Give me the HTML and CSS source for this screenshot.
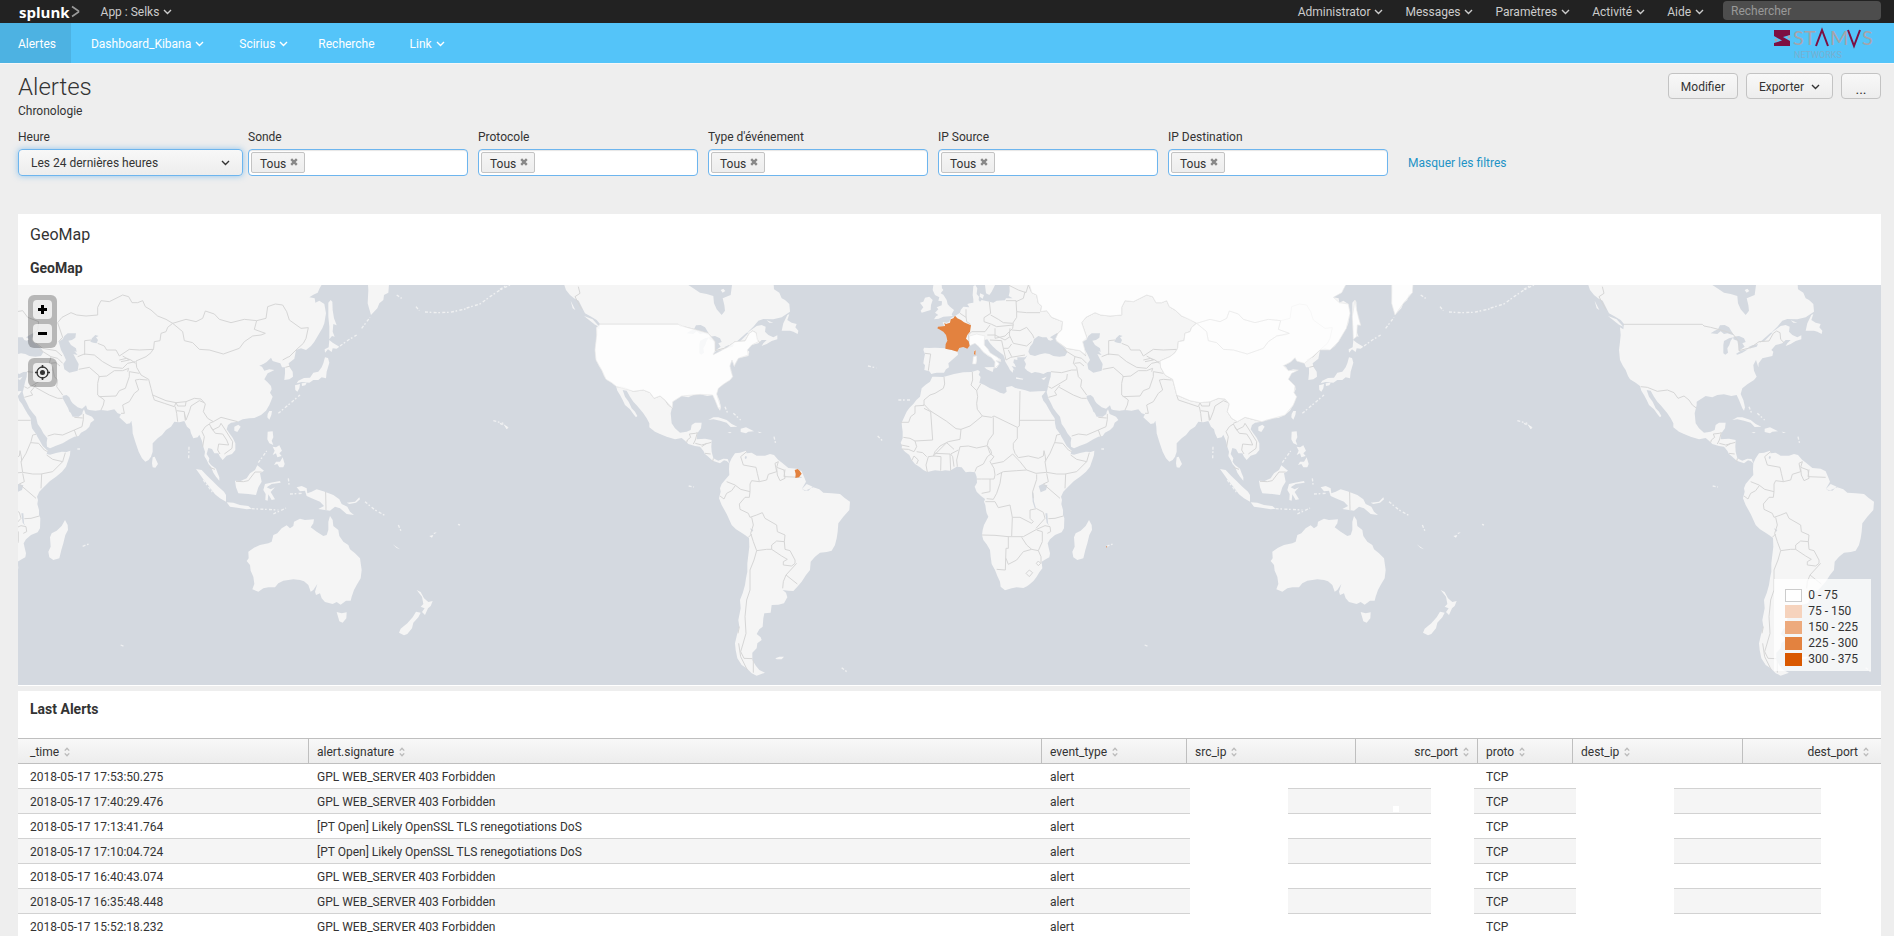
FILE: index.html
```
<!DOCTYPE html>
<html lang="fr">
<head>
  <meta charset="UTF-8">
  <meta name="viewport" content="width=device-width, initial-scale=1.0">
  <title>Alertes | Splunk</title>
  <link rel="stylesheet" href="styles.css">
</head>
<body>
  <svg class="defs" width="0" height="0" aria-hidden="true">
    <symbol id="caret" viewBox="0 0 9 6"><path d="M1 1l3.5 3.5L8 1" fill="none" stroke="currentColor" stroke-width="1.4"/></symbol>
    <symbol id="sort" viewBox="0 0 6 10"><path d="M.8 3.6L3 1.2l2.2 2.4M.8 6.4L3 8.8l2.2-2.4" fill="none" stroke="currentColor" stroke-width="1.4"/></symbol>
    <symbol id="cross" viewBox="0 0 8 8"><path d="M1.2 1.2l5.6 5.6M6.8 1.2L1.2 6.8" fill="none" stroke="currentColor" stroke-width="2.4"/></symbol>
  </svg>

  <header class="topbar">
    <a class="brand" href="#">splunk<svg width="9" height="13" viewBox="0 0 9 13"><path d="M1 1.5l6.500 4.500v1L1 11.500" fill="none" stroke="#999" stroke-width="1.6"/></svg></a>
    <a class="menu" href="#">App : Selks <svg class="caret"><use href="#caret"/></svg></a>
    <nav class="account">
      <a class="menu" href="#">Administrator <svg class="caret"><use href="#caret"/></svg></a>
      <a class="menu" href="#">Messages <svg class="caret"><use href="#caret"/></svg></a>
      <a class="menu" href="#">Paramètres <svg class="caret"><use href="#caret"/></svg></a>
      <a class="menu" href="#">Activité <svg class="caret"><use href="#caret"/></svg></a>
      <a class="menu" href="#">Aide <svg class="caret"><use href="#caret"/></svg></a>
    </nav>
    <input class="search" type="text" placeholder="Rechercher" aria-label="Rechercher">
  </header>

  <nav class="navbar">
    <a class="active" href="#">Alertes</a>
    <a class="drop" href="#">Dashboard_Kibana <svg class="caret"><use href="#caret"/></svg></a>
    <a class="drop" href="#">Scirius <svg class="caret"><use href="#caret"/></svg></a>
    <a href="#">Recherche</a>
    <a class="drop" href="#">Link <svg class="caret"><use href="#caret"/></svg></a>
    <svg class="stamus" width="102" height="34" viewBox="0 0 102 34">
      <path d="M0 4h16v5l-7 2 7 4v5H0v-3l8-2.500L0 10z" fill="#7d0f42"/>
      <circle cx="2" cy="14" r="1.500" fill="#b3a0a8"/><circle cx="15" cy="11" r="1.500" fill="#b3a0a8"/>
      <g class="stamus-name"><text x="19" y="19">S</text><text x="30" y="19">T</text><text x="56" y="19">M</text><text x="88" y="19">S</text></g>
      <path d="M42 20l6-16 6 16M74 4l6 16 6-16" fill="none" stroke="#7d0f42" stroke-width="2"/>
      <text class="stamus-sub" x="20" y="32">NETWORKS</text>
    </svg>
  </nav>

  <main>
    <div class="heading">
      <div>
        <h1>Alertes</h1>
        <p>Chronologie</p>
      </div>
      <div class="actions">
        <button type="button">Modifier</button>
        <button type="button">Exporter <svg class="caret"><use href="#caret"/></svg></button>
        <button type="button" class="more">...</button>
      </div>
    </div>

    <form class="filters">
      <div class="field time">
        <label for="heure">Heure</label>
        <select id="heure"><option>Les 24 dernières heures</option></select>
      </div>
      <div class="field">
        <label for="sonde">Sonde</label>
        <div class="multi"><span class="tag">Tous <button type="button" aria-label="Retirer"><svg><use href="#cross"/></svg></button></span><input id="sonde" type="text"></div>
      </div>
      <div class="field">
        <label for="protocole">Protocole</label>
        <div class="multi"><span class="tag">Tous <button type="button" aria-label="Retirer"><svg><use href="#cross"/></svg></button></span><input id="protocole" type="text"></div>
      </div>
      <div class="field">
        <label for="type">Type d'événement</label>
        <div class="multi"><span class="tag">Tous <button type="button" aria-label="Retirer"><svg><use href="#cross"/></svg></button></span><input id="type" type="text"></div>
      </div>
      <div class="field">
        <label for="ipsource">IP Source</label>
        <div class="multi"><span class="tag">Tous <button type="button" aria-label="Retirer"><svg><use href="#cross"/></svg></button></span><input id="ipsource" type="text"></div>
      </div>
      <div class="field">
        <label for="ipdest">IP Destination</label>
        <div class="multi"><span class="tag">Tous <button type="button" aria-label="Retirer"><svg><use href="#cross"/></svg></button></span><input id="ipdest" type="text"></div>
      </div>
      <a class="hide" href="#">Masquer les filtres</a>
    </form>

    <section class="panel">
      <h2>GeoMap</h2>
      <h3>GeoMap</h3>
      <div class="map">
        <svg class="world" viewBox="54 855 5589 1200" preserveAspectRatio="xMidYMid slice" role="img" aria-label="Carte du monde">
          <defs>
            <g id="oldworld">
              <g transform="translate(-432 840)">
                <!-- Africa -->
                <path class="land" d="M157 290L165 290 190 291 222 282 250 277 275 276 294 270 300 275 296 284 302 291 298 309 312 314 330 325 345 330 360 338 372 341 380 335 378 322 395 318 406 324 420 327 436 331 450 335 475 334 497 333 490 343 485 348 490 362 498 372 505 385 515 402 524 415 525 430 528 445 540 462 545 472 550 480 560 498 575 512 572 522 582 524 600 519 618 515 632 516 643 512 642 525 636 543 630 560 618 575 600 590 582 603 560 625 550 635 543 650 546 660 544 672 549 690 549 705 553 715 552 745 545 757 525 765 510 778 503 790 506 803 510 820 508 832 497 838 485 845 487 865 478 877 470 890 461 902 450 912 441 919 430 924 410 922 395 925 375 931 362 920 360 905 352 888 345 870 335 852 332 830 330 810 320 793 310 780 306 765 308 750 312 735 325 710 320 700 318 690 316 675 312 665 315 657 303 648 290 635 284 620 291 608 290 590 285 577 270 575 257 577 245 562 230 560 210 572 195 571 185 573 165 571 142 576 130 570 120 562 105 552 95 540 88 525 75 515 65 505 66 497 62 488 68 475 68 455 66 440 65 428 73 410 80 395 88 384 100 372 109 360 120 350 125 325 137 314 150 305Z"/>
                <!-- Europe and Asia -->
                <path class="land" d="M388 0L389 35 386 48 398 55 378 55 375 61 350 62 340 68 328 65 305 60 300 65 296 60 297 50 290 42 292 25 286 15 280 18 278 45 280 58 280 68 270 70 262 72 268 82 250 80 242 90 240 98 225 108 212 115 208 125 200 128 188 126 192 138 172 142 180 150 190 152 197 163 200 175 202 185 198 205 180 204 165 203 148 204 132 203 130 210 135 222 132 236 130 250 135 256 133 270 148 274 154 282 162 280 170 278 192 278 198 268 207 262 205 250 222 235 234 224 232 212 240 203 253 200 262 205 268 198 276 192 285 190 297 200 303 209 312 218 324 228 335 233 345 245 347 256 343 265 350 264 358 252 354 246 348 242 352 238 363 245 362 238 352 232 340 226 330 218 324 208 313 195 313 180 322 178 330 190 338 199 350 210 362 219 370 225 374 235 376 245 385 260 390 270 398 278 400 268 405 272 395 258 408 262 404 252 400 248 402 238 412 240 412 232 435 232 442 226 436 236 432 240 438 252 434 264 442 272 455 280 465 276 478 278 490 282 502 276 513 275 512 290 508 303 504 320 502 330 500 336 505 355 513 370 520 385 530 398 540 410 545 432 555 446 562 460 574 475 572 488 573 500 582 505 600 497 620 490 640 478 655 470 668 468 675 458 690 450 700 440 704 428 715 420 708 410 696 405 689 402 684 388 680 395 679 402 668 410 650 410 644 398 640 395 636 384 628 370 620 355 620 347 632 345 640 352 645 363 650 370 665 382 678 386 690 376 694 388 700 390 718 392 735 390 755 392 775 388 785 400 795 403 790 412 812 432 822 430 826 422 829 440 830 460 838 486 848 515 858 535 868 545 878 540 885 530 890 515 890 490 905 475 918 465 930 450 945 440 955 425 970 427 985 423 993 440 1002 448 1005 460 1012 475 1025 472 1030 464 1038 483 1042 500 1047 515 1045 528 1052 540 1058 553 1065 560 1072 578 1080 590 1090 602 1090 592 1085 580 1080 566 1065 555 1058 545 1060 535 1052 522 1057 504 1068 507 1075 520 1087 520 1092 530 1100 540 1112 527 1128 522 1138 510 1138 490 1130 473 1120 460 1112 448 1116 435 1125 428 1145 425 1160 418 1180 415 1195 414 1215 405 1230 392 1240 375 1245 363 1250 350 1242 338 1247 328 1245 318 1234 306 1225 298 1235 280 1245 275 1255 270 1240 268 1225 272 1218 260 1210 257 1222 252 1232 246 1245 233 1250 243 1262 247 1273 250 1278 262 1287 262 1287 280 1285 300 1300 298 1311 290 1310 275 1300 260 1298 250 1315 236 1320 210 1335 205 1350 210 1365 198 1375 185 1390 160 1399 145 1405 130 1410 100 1405 72 1390 62 1378 68 1376 55 1360 52 1372 44 1385 38 1391 25 1405 0Z"/>
                <path class="land" d="M160 15L185 15 186 25 190 30 182 40 190 44 200 60 203 73 210 80 222 90 215 103 218 108 190 110 176 116 162 118 168 109 175 105 165 98 175 88 170 82 185 76 186 64 175 62 178 52 165 45 158 30ZM120 68L130 65 135 53 148 50 158 60 153 75 152 90 125 98 122 92 130 82ZM315 15L345 15 335 35 328 45 318 40ZM300 40L312 45 308 56 299 50ZM280 230L290 228 291 240 288 252 278 252ZM313 262L342 261 338 276 320 268ZM408 292L430 296 428 299 408 296ZM484 296L500 290 492 300ZM282 212L287 210 286 226 282 222Z"/>
                <path class="water" d="M445 215L450 200 458 190 462 178 475 168 487 172 500 172 505 180 512 182 520 178 510 172 530 160 536 160 527 176 530 184 545 196 556 205 562 217 555 228 538 230 520 228 508 222 495 220 480 223 465 228 450 224ZM608 185L620 178 625 168 635 160 660 160 658 173 648 180 637 182 645 195 660 205 662 216 655 213 665 225 652 222 660 238 668 252 665 272 640 278 625 268 622 252 630 240 622 222 615 210ZM703 185L708 175 718 165 728 168 720 172 726 180 722 190 712 188ZM476 618L488 612 502 616 498 630 482 637ZM456 635L460 640 462 665 468 685 464 684 458 665ZM496 700L502 700 504 730 508 738 500 728Z"/>
                <path class="border" d="M192 291L194 312 190 325 165 340 150 345 132 360 132 376 105 378 105 400 92 410 86 427 62 427M132 373L150 392 200 424 228 446 243 448 270 438 307 408 292 388 290 370 293 350 290 332 273 315 278 300 277 276M290 332L302 312M132 385L152 395 158 480 105 483 90 475 70 472M105 483L110 500 102 515 85 508 65 507M64 495L88 500M243 448L240 478 205 485 180 498 165 515 160 528M307 408L335 412 342 408 412 442M420 333L418 438 412 442 412 475 400 490 400 505 405 520M420 421L524 421M340 412L340 462 325 482 322 495M232 560L230 540 240 500 265 498 290 504 322 497 332 510 335 520 322 530 310 552 290 562 285 575M405 520L415 533 445 528 475 535 490 528 492 512 496 530 497 545M335 552L370 545 398 522 420 545 440 570 410 572 370 575 350 585M322 497L330 520 342 530 330 545 342 565 345 585M345 585L342 597 305 597 290 597M330 597L330 635 305 640M440 570L468 580 500 577 495 545 510 520 525 485 530 465 540 463M525 488L548 490 565 510 575 515M572 525L590 538 620 545 590 575 555 582 530 582 500 577M620 545L628 518M555 625L557 582M470 583L470 598 458 635 460 655M500 580L505 605 490 612 540 655M365 577L360 610 350 640 340 658 320 656M316 665L345 665 355 683 390 675 397 712 420 712 455 730 460 725 450 715 450 690 470 686 490 697M397 712L395 768M306 765L345 766 385 770 430 770 470 748 495 737 510 740 512 755 502 760M490 697L495 715 468 745M505 716L525 715 550 708M385 768L385 805 378 805 376 870 350 868M378 835L385 853 410 840 430 815 455 808 440 795 425 772M455 808L475 812 487 785 487 755 470 750M475 812L483 830 483 850M469 850L475 843 482 850 475 857ZM438 880L448 870 458 878 448 890ZM142 576L138 555 145 530 162 528 183 530 182 572M110 515L128 518 140 530M95 542L102 528 115 540 110 552M212 572L210 522 165 520M222 560L218 530 212 522 235 510M160 528L200 488 222 508"/>
                <path class="border" d="M135 220L152 222 148 250 145 272M198 205L232 212M258 88L258 108 260 125 272 133M240 100L258 112M328 65L332 100 312 113 312 125 335 133 350 140 400 135M332 105L355 118 370 128 398 130 410 112 410 95 408 62 378 62M330 135L315 155 275 155M275 155L265 165 268 195M345 145L345 175 375 168 398 145 400 130M322 165L345 165 375 180 390 170M410 95L440 98 480 98M390 145L388 165 400 190 440 198 455 185M395 150L420 152 440 142 458 165 462 175M330 180L365 182 370 205 385 205 395 192M370 205L378 240 392 232 435 225M385 210L395 230M385 15L415 30 438 38 445 15M435 35L430 55 408 65M445 14L455 38 470 45 475 70 485 78 482 95 500 92 515 112 548 125 545 150 528 165M530 182L560 205 600 212 618 228M608 185L620 172 605 128 618 112 645 98 662 105 690 108 725 105 725 82 735 62 760 65 800 45 818 50 828 68 845 68 860 62 868 80 885 90 905 108 930 118 950 130M550 208L585 230 580 250 590 262M585 230L605 235 620 250M583 250L600 248 612 258M513 275L545 278 575 270 590 270M590 262L595 290 605 300 602 320 620 345M562 282L560 298 515 325M538 322L580 345 605 355 620 355M505 352L530 345 524 335 540 315M505 320L515 325M575 468L595 462 620 465 655 450 662 470M655 450L678 440 682 418 682 402M655 412L680 414M668 268L700 262 730 288 725 310 725 345 745 360 742 375 735 390M728 290L752 288 775 272 800 272 818 265 815 275M728 350L780 348 790 332 808 325 820 290 820 275 850 280M795 400L805 400 800 375 820 365 835 340 848 330 838 300 850 298 875 300M665 230L685 222 715 225 740 245 770 262M686 225L686 182 705 180M725 190L745 198 752 210 780 210 790 228 820 208 850 210 893 208M790 240L812 235 825 240 838 250M800 228L820 240 795 245M770 262L800 265 815 250 838 245M890 345L895 360 925 370 955 380 960 368M960 368L965 378 988 378 990 366M958 380L962 400 965 425M988 422L985 395 962 392M985 400L990 420 1000 395 1005 378 1030 362 1045 368M1040 500L1045 470 1038 455 1048 440 1060 432 1070 450 1090 440 1095 430M1065 442L1078 460 1100 462 1112 480 1118 495 1088 492 1085 510 1092 522M1095 430L1108 450 1130 485 1128 505 1105 522M1060 430L1072 425M1280 240L1298 230M1288 262L1303 258"/>
                <path class="border" d="M950 130L990 118 1020 125 1040 115 1048 93 1075 102 1090 118 1125 128 1165 118 1202 122 1195 148 1228 160 1215 165 1190 168 1165 185 1150 205 1102 222 1060 210 1030 208 1010 188 985 182 980 155Z"/>
                <path class="border" d="M950 130L935 142 930 155 915 160 912 182 895 185 893 205 885 218 870 230 840 243 842 262 855 285 878 298 885 325 890 345 930 362 960 368 990 365 1015 355 1035 357 1048 372 1042 395 1055 415 1072 425 1095 412 1145 425M1202 122L1230 115 1235 80 1258 72 1280 75 1292 95 1300 120 1335 145 1357 143 1350 175 1342 190 1320 210 1298 232"/>
              </g>
              <g transform="translate(0 840)">
                <!-- islands, South Asia to the Pacific -->
                <path class="land" d="M458 532L464 530 474 552 466 563 458 562 456 550ZM588 567L605 570 622 588 640 605 655 620 672 635 678 645 678 665 660 655 645 643 628 620 610 598ZM680 667L700 668 720 675 745 678 755 686 740 688 712 683 690 680ZM705 602L722 603 740 595 750 580 765 570 772 556 792 572 780 580 785 605 775 622 768 645 745 642 715 640 708 622ZM795 612L812 608 840 603 842 608 815 612 800 622 812 628 825 622 812 636 825 658 815 660 805 643 803 662 796 660 797 642 790 630ZM890 622L905 618 920 625 922 640 935 635 950 628 970 634 1000 645 1018 658 1025 672 1042 680 1050 695 1062 705 1040 702 1020 685 1005 680 990 692 955 687 972 678 960 665 935 655 920 648 915 632 900 634ZM1040 668L1065 665 1078 652 1080 658 1068 668 1048 672Z"/>
                <path class="land" d="M745 815L762 803 780 795 805 790 815 785 820 765 832 760 845 745 860 736 870 745 880 738 882 725 900 716 915 720 942 718 940 730 932 742 950 755 970 768 980 765 985 750 985 725 990 708 998 720 1000 738 1015 750 1018 768 1030 785 1045 795 1050 808 1065 820 1080 835 1085 870 1082 895 1070 915 1062 930 1055 950 1052 962 1038 962 1022 974 1010 966 998 972 975 966 965 955 960 940 948 945 945 935 952 912 940 930 932 935 925 915 912 904 900 900 880 898 850 902 835 910 825 922 805 922 790 925 775 935 757 928 763 912 760 890 752 872 750 855 740 843 746 835ZM1010 996L1025 1000 1040 997 1039 1015 1028 1028 1018 1024ZM1250 930L1262 936 1272 955 1285 966 1298 963 1292 978 1284 985 1275 1005 1266 996 1274 985 1262 980 1270 972 1266 950ZM1248 995L1262 998 1255 1012 1240 1028 1236 1045 1222 1062 1212 1066 1197 1058 1202 1046 1222 1030 1238 1012ZM1178 793L1200 808 1190 804ZM1288 768L1300 765 1296 773ZM1300 759L1310 757 1304 762Z"/>
                <path class="land" d="M988 180L998 188 1018 200 1010 206 998 205 995 216 984 208 975 218 974 208 986 202ZM975 232L984 234 988 248 984 262 980 275 978 295 965 292 955 300 940 300 928 308 905 306 890 310 895 302 912 294 930 293 940 278 955 275 965 262 970 250ZM885 316L900 312 898 325 892 335 886 330ZM905 310L920 308 916 316 906 318ZM985 68L992 60 997 65 998 90 1002 115 1010 136 1000 132 998 155 1004 170 996 168 988 178 988 140 985 110ZM1103 0L1168 0 1165 38 1152 45 1150 60 1138 70 1132 85 1113 105 1108 88 1103 70 1105 30ZM803 402L808 393 816 393 814 405 808 419 802 412ZM703 440L715 434 722 440 712 456 703 452ZM803 455L818 454 820 472 815 482 820 495 808 490 802 478ZM828 545L840 545 848 532 854 552 850 562 838 562 832 552 822 555ZM818 500L828 502 838 496 846 512 838 520 845 528 832 532 828 520 818 525 824 512ZM195 720L203 735 204 750 196 765 190 790 184 810 178 835 160 840 148 832 145 815 152 800 150 772 155 760 170 752 185 738Z"/>
                <path class="isle" d="M755 686L835 690M820 702L858 684M775 548L800 513M1020 198L1045 180 1070 165M1085 145L1110 112M835 400L900 345M567 500L566 535M1095 665L1125 690 1158 708M865 595L868 620M870 642L905 640M610 600L640 640M1190 45L1205 55M1248 80L1258 92M1275 96L1310 98 1350 97 1400 86M362 1095L375 1100M232 507L240 507M248 799L266 792M1195 735L1205 758M1480 422L1510 430M1374 733L1380 735"/>
                <path class="isle" d="M1400 84L1440 72 1470 50 1500 30 1530 15"/>
                <path class="border" d="M977 636L978 690M708 604L730 605 745 602 758 585 765 576 785 576M628 562L645 568"/>
              </g>
            </g>
            <g id="americas" transform="translate(1500 840)">
              <path class="land" d="M188 0L198 30 210 45 222 55 236 62 245 80 255 100 270 108 290 120 300 132 298 148 288 142 290 165 288 185 285 210 288 240 297 258 305 270 312 288 318 298 335 308 348 318 352 332 360 345 368 360 375 375 390 388 400 402 408 412 412 408 405 395 395 385 386 365 375 350 368 330 380 332 390 350 400 365 412 378 430 400 440 415 448 430 448 442 465 455 480 462 500 470 525 478 545 474 555 482 565 492 585 498 600 500 610 512 615 522 625 530 638 542 660 550 672 541 680 543 688 550 687 568 688 585 675 600 665 612 660 625 662 635 657 655 665 675 680 702 695 735 708 748 720 755 735 765 747 774 748 800 745 825 742 850 742 875 738 895 735 915 728 940 720 960 722 985 715 1020 718 1040 712 1060 705 1090 707 1110 712 1135 725 1155 740 1165 755 1180 770 1187 795 1178 778 1170 768 1158 757 1140 757 1118 770 1105 772 1090 785 1080 782 1072 770 1062 778 1048 788 1040 790 1015 793 1000 812 998 815 975 835 974 852 970 862 952 858 938 848 930 865 932 880 933 892 920 905 905 918 885 930 870 932 845 945 830 960 818 980 816 995 812 1005 795 1010 775 1013 755 1015 730 1030 710 1048 690 1050 665 1035 655 1020 642 995 640 970 638 958 628 940 622 915 632 905 628 918 605 912 590 905 574 890 566 865 564 848 550 835 540 822 525 810 522 795 527 770 527 755 518 740 520 738 512 720 518 705 520 695 535 688 550 683 537 670 536 655 542 640 535 635 515 634 500 635 480 615 476 590 478 592 460 603 445 605 428 585 428 575 435 572 450 560 455 540 458 525 445 515 430 512 400 518 375 518 365 545 348 565 352 580 345 600 343 622 348 638 345 645 360 655 385 660 392 663 382 658 360 650 342 655 325 670 313 690 300 698 290 690 272 688 255 696 240 703 262 704 250 715 235 745 228 748 215 742 210 755 195 775 190 785 180 800 180 790 190 785 198 800 192 815 183 832 178 832 166 820 172 805 165 795 155 797 140 785 135 770 138 740 160 760 140 775 122 790 117 820 118 845 112 870 95 868 72 855 60 845 55 838 38 822 28 820 0ZM845 152L850 130 862 105 868 102 862 120 875 128 890 132 886 142 895 152 893 162 880 155 870 152ZM625 420L640 412 655 412 680 420 695 432 712 440 692 441 680 428 660 422 640 418ZM722 446L738 442 750 448 762 454 745 455 738 460 722 456ZM682 456L695 457 690 460ZM773 455L786 457 778 459ZM800 121L820 128 808 128ZM826 1135L838 1130 852 1130 845 1138 830 1138ZM10 432L25 442 20 448ZM212 62L226 90 218 85ZM252 108L278 118 298 140 285 134ZM905 628L920 612 938 620 925 632Z"/>
              <path class="isle" d="M0 430L12 436M566 618L582 621M675 380L684 402M700 400L722 420M822 470L828 495M1025 1163L1040 1175M1104 258L1130 264M1195 360L1230 360M1133 468L1150 485M0 28L45 0M20 445L24 442"/>
              <path class="water" d="M555 0L565 15 580 25 600 38 620 42 640 48 642 70 650 88 665 105 675 92 673 75 668 55 692 45 696 15 695 0Z"/>
              <path class="land" d="M662 30L670 26 676 33 668 38Z"/>
              <path class="water" d="M560 160L572 152 582 148 588 136 602 135 615 142 625 158 628 166 610 160 600 162 590 154 580 162ZM598 220L598 195 600 183 615 175 628 172 620 182 616 195 610 205 612 218 604 224ZM628 170L645 168 660 175 665 186 655 190 662 200 645 212 643 198 640 182 628 178ZM636 222L650 212 672 208 655 218 640 224ZM672 202L685 196 702 192 698 200 680 205ZM706 188L740 158 746 158 722 182ZM736 528L741 530 738 538 734 534ZM750 745L760 750 756 756Z"/>
              <path class="border" d="M298 133L535 133 540 138 560 142 590 150 625 160 645 185 645 212 680 203 705 185 735 183 748 160 758 153 768 158 770 178 780 188M350 320L370 322 400 334 430 330 450 338 462 355 480 348 495 360 505 375 517 384M560 488L562 480 572 472 568 462 586 460 592 458 586 480 580 492M586 490L605 495 634 487M605 500L620 490M615 520L632 522M640 535L638 545M740 515L722 530 730 555 768 562 772 580 778 605 800 600 805 583 830 575 825 550 835 545M778 605L755 602 750 612 750 635 722 628 705 615 680 605M705 618L695 632 680 640 672 657 660 648M750 635L748 652 735 652 718 672 720 688 745 700 750 712 770 705 787 698 795 715 830 735 832 755 855 765 853 785M835 545L830 562 852 570 855 595 840 602 832 585 830 565M855 568L852 590 905 592M755 712L760 735 752 760 760 785 770 812 800 808 815 808 815 795 830 783 853 785 855 808 870 812 885 840 885 850 875 858 850 855 850 845 862 838 845 828 815 808M890 850L858 885 892 912M858 885L850 905 848 925M745 772L755 762M770 812L762 840 750 870 750 930 740 960 735 1010 738 1060 728 1095 722 1115 732 1135 757 1136M760 1140L760 1178M716 1090L722 1130 742 1170M718 1040L714 1060M245 88L225 50 240 40 235 20"/>
            </g>
          </defs>
          <rect class="water" x="-3000" y="0" width="12000" height="3000"/>
          <use href="#oldworld"/>
          <use href="#oldworld" x="3072"/>
          <use href="#americas"/>
          <use href="#americas" x="3072"/>
          <!-- countries with data -->
          <g transform="translate(1500 840)">
            <path class="low" d="M300 133L535 133 560 142 590 150 625 160 645 185 645 212 640 224 680 203 705 185 735 183 748 160 758 153 768 158 775 185 755 195 742 210 745 225 715 235 703 258 696 240 690 258 698 290 690 300 670 313 655 325 650 342 662 382 655 385 645 360 638 345 600 343 545 348 518 365 517 384 495 360 480 348 462 355 450 338 430 330 400 334 350 320 335 308 318 298 305 270 288 240 285 210 290 165 290 142Z"/>
            <path class="high" d="M884 570L893 567 899 572 905 581 897 592 886 594 887 582Z"/>
          </g>
          <g transform="translate(2640 840)">
            <path class="low" d="M445 0L455 38 470 45 475 70 485 78 482 95 500 92 515 112 548 125 545 150 534 160 527 176 530 184 560 205 600 212 618 225 608 185 620 178 620 172 605 128 618 112 645 98 662 105 690 108 725 105 725 82 735 62 760 65 800 45 818 50 828 68 845 68 860 62 868 80 885 90 905 108 950 130 980 155 985 182 1010 188 1030 208 1060 210 1102 222 1150 205 1165 185 1190 168 1228 160 1195 148 1202 122 1165 118 1125 128 1090 118 1075 102 1048 93 1040 115 1020 125 990 118 950 130 935 142 930 155 915 160 912 182 895 185 893 205 885 218 870 230 840 243 842 262 855 285 878 298 885 325 890 345 930 362 960 368 990 365 1015 355 1035 357 1048 372 1042 395 1055 415 1072 425 1095 412 1145 425 1180 415 1215 405 1240 375 1250 350 1242 338 1245 318 1225 298 1235 280 1255 270 1225 272 1210 257 1232 246 1245 233 1250 243 1273 250 1298 230 1320 210 1350 210 1375 185 1399 145 1410 100 1405 72 1378 68 1360 52 1385 38 1405 0ZM268 168L290 162 315 168 313 180 313 195 324 208 330 218 352 232 363 245 348 242 358 252 343 265 345 245 335 233 312 218 297 200 285 190 268 198ZM1425 60L1430 90 1442 136 1432 135 1430 170 1420 178 1417 110ZM1535 0L1600 0 1597 38 1570 70 1545 105 1535 70ZM280 230L290 228 288 252 278 252Z"/>
            <path class="high" d="M225 107L232 115 243 120 252 127 273 136 270 155 262 165 258 176 266 184 269 197 262 206 250 201 238 204 232 215 215 210 196 206 197 192 202 182 198 165 190 155 172 145 174 140 195 138 193 128 198 132 210 128 212 118 220 115ZM283 213L287 211 286 226 282 222ZM678 798L682 800 679 803Z"/>
          </g>
        </svg>
        <div class="map-tools">
          <div class="tool-box">
            <button type="button" aria-label="Zoom avant"><svg width="9" height="9" viewBox="0 0 9 9"><path d="M4.500 0v9M0 4.500h9" stroke="#000" stroke-width="3"/></svg></button>
            <button type="button" aria-label="Zoom arrière"><svg width="9" height="9" viewBox="0 0 9 9"><path d="M0 4.500h9" stroke="#000" stroke-width="3"/></svg></button>
          </div>
          <div class="tool-box">
            <button type="button" aria-label="Recentrer"><svg width="15" height="15" viewBox="0 0 15 15"><circle cx="7.500" cy="7.500" r="5.500" fill="none" stroke="#333" stroke-width="1.300"/><circle cx="7.500" cy="7.500" r="2.500" fill="#333"/><path d="M7.500 0v3M7.500 12v3M0 7.500h3M12 7.500h3" stroke="#333" stroke-width="1.600"/></svg></button>
          </div>
        </div>
        <ul class="legend">
          <li><i class="s1"></i>0 - 75</li>
          <li><i class="s2"></i>75 - 150</li>
          <li><i class="s3"></i>150 - 225</li>
          <li><i class="s4"></i>225 - 300</li>
          <li><i class="s5"></i>300 - 375</li>
        </ul>
      </div>
    </section>

    <section class="panel alerts">
      <h3>Last Alerts</h3>
      <table>
        <colgroup>
          <col class="c-time"><col><col class="c-type"><col class="c-src"><col class="c-sport"><col class="c-proto"><col class="c-dest"><col class="c-dport">
        </colgroup>
        <thead>
          <tr>
            <th>_time <svg><use href="#sort"/></svg></th>
            <th>alert.signature <svg><use href="#sort"/></svg></th>
            <th>event_type <svg><use href="#sort"/></svg></th>
            <th>src_ip <svg><use href="#sort"/></svg></th>
            <th class="num">src_port <svg><use href="#sort"/></svg></th>
            <th>proto <svg><use href="#sort"/></svg></th>
            <th>dest_ip <svg><use href="#sort"/></svg></th>
            <th class="num">dest_port <svg><use href="#sort"/></svg></th>
          </tr>
        </thead>
        <tbody>
          <tr><td>2018-05-17 17:53:50.275</td><td>GPL WEB_SERVER 403 Forbidden</td><td>alert</td><td class="mask ip"></td><td class="mask sport"></td><td>TCP</td><td class="mask ip"></td><td class="mask dport"></td></tr>
          <tr><td>2018-05-17 17:40:29.476</td><td>GPL WEB_SERVER 403 Forbidden</td><td>alert</td><td class="mask ip"></td><td class="mask sport"><span class="spot"></span></td><td>TCP</td><td class="mask ip"></td><td class="mask dport"></td></tr>
          <tr><td>2018-05-17 17:13:41.764</td><td>[PT Open] Likely OpenSSL TLS renegotiations DoS</td><td>alert</td><td class="mask ip"></td><td class="mask sport"></td><td>TCP</td><td class="mask ip"></td><td class="mask dport"></td></tr>
          <tr><td>2018-05-17 17:10:04.724</td><td>[PT Open] Likely OpenSSL TLS renegotiations DoS</td><td>alert</td><td class="mask ip"></td><td class="mask sport"></td><td>TCP</td><td class="mask ip"></td><td class="mask dport"></td></tr>
          <tr><td>2018-05-17 16:40:43.074</td><td>GPL WEB_SERVER 403 Forbidden</td><td>alert</td><td class="mask ip"></td><td class="mask sport"></td><td>TCP</td><td class="mask ip"></td><td class="mask dport"></td></tr>
          <tr><td>2018-05-17 16:35:48.448</td><td>GPL WEB_SERVER 403 Forbidden</td><td>alert</td><td class="mask ip"></td><td class="mask sport"></td><td>TCP</td><td class="mask ip"></td><td class="mask dport"></td></tr>
          <tr><td>2018-05-17 15:52:18.232</td><td>GPL WEB_SERVER 403 Forbidden</td><td>alert</td><td class="mask ip"></td><td class="mask sport"></td><td>TCP</td><td class="mask ip"></td><td class="mask dport"></td></tr>
        </tbody>
      </table>
    </section>
  </main>
</body>
</html>
```
FILE: styles.css
```
* {
  box-sizing: border-box;
}
body {
  margin: 0;
  background: #eee;
  color: #333;
  font-family: Roboto, sans-serif;
  font-size: 12px;
  line-height: 20px;
}
a {
  color: inherit;
  text-decoration: none;
}
button, input, select {
  font: inherit;
  color: inherit;
}
.defs {
  display: block;
}
.caret {
  width: 9px;
  height: 6px;
  margin-left: 1px;
  vertical-align: 1px;
}

/* top bars */
.topbar {
  display: flex;
  align-items: center;
  height: 23px;
  padding: 0 13px 0 19px;
  background: #222;
  color: #ccc;
}
.brand {
  display: flex;
  align-items: center;
  gap: 1px;
  margin-right: 21px;
  color: #fff;
  font: 700 15px/20px "Open Sans", sans-serif;
}
.account {
  display: flex;
  gap: 22px;
  margin: 0 19px 0 auto;
}
.search {
  width: 158px;
  height: 19px;
  margin-bottom: 2px;
  padding: 0 8px;
  border: 0;
  border-radius: 4px;
  background: #4d4d4d;
  color: #ccc;
}
.search::placeholder {
  color: #999;
}
.navbar {
  display: flex;
  height: 41px;
  padding-right: 18px;
  border-bottom: 1px solid #f7f7f7;
  background: #54c4f9;
  color: #fff;
  line-height: 42px;
}
.navbar a {
  padding: 0 15px;
}
.navbar .drop {
  padding-left: 20px;
}
.navbar .active {
  padding-left: 18px;
  background: #4db2e2;
}
.stamus {
  margin: 3px 0 0 auto;
}
.stamus-name {
  fill: #a7a3aa;
  font: 400 20px Lato, sans-serif;
}
.stamus-sub {
  fill: #79afd0;
  font: 9px Roboto, sans-serif;
}

/* title and filters */
main {
  padding: 0 13px 0 18px;
}
.heading {
  display: flex;
  justify-content: space-between;
  padding-top: 9px;
}
h1 {
  margin: 0;
  padding-top: 1px;
  font-size: 24px;
  font-weight: 300;
  line-height: 27px;
}
.heading p {
  margin: 0;
}
.actions {
  display: flex;
  align-items: flex-start;
  gap: 8px;
}
.actions button {
  height: 26px;
  padding: 1px 12px 0;
  border: 1px solid #c3c3c3;
  border-radius: 4px;
  background: linear-gradient(#f8f8f8, #ededed);
}
.actions .caret {
  margin-left: 4px;
}
.actions .more {
  width: 40px;
  padding-top: 5px;
  font-size: 14px;
}
.filters {
  display: flex;
  align-items: flex-end;
  gap: 10px;
  padding: 6px 0 38px;
}
.field {
  display: flex;
  flex-direction: column;
  gap: 2px;
  width: 220px;
}
.field label {
  height: 20px;
}
.time {
  width: 225px;
  margin-right: -5px;
}
.time select {
  height: 27px;
  padding: 1px 12px 0;
  border: 1px solid #6db5ee;
  border-radius: 4px;
  outline: 0;
  appearance: none;
  background: url("data:image/svg+xml,%3Csvg xmlns='http://www.w3.org/2000/svg' width='9' height='6'%3E%3Cpath d='M1 1l3.500 3.500L8 1' fill='none' stroke='%23333' stroke-width='1.400'/%3E%3C/svg%3E") no-repeat right 12px center, linear-gradient(#f8f8f8, #ededed);
  box-shadow: 0 0 6px rgba(82, 168, 236, 0.6);
}
.multi {
  display: flex;
  height: 27px;
  padding: 2px;
  border: 1px solid #6db5ee;
  border-radius: 4px;
  background: #fff;
  box-shadow: inset 0 1px 1px rgba(0, 0, 0, 0.1);
}
.multi input {
  flex: 1;
  min-width: 0;
  border: 0;
  outline: 0;
  background: none;
}
.tag {
  display: flex;
  flex: none;
  gap: 4px;
  height: 21px;
  padding: 1px 6px 0 8px;
  border: 1px solid #c3c3c3;
  border-radius: 2px;
  background: linear-gradient(#f5f5f5, #ededed);
}
.tag button {
  height: 16px;
  padding: 0;
  border: 0;
  background: none;
  color: #888;
  line-height: 16px;
}
.tag svg {
  display: block;
  width: 8px;
  height: 8px;
}
.hide {
  margin: 0 0 3px 10px;
  color: #1e93c6;
}

/* panels */
.panel {
  margin-bottom: 5px;
  padding-bottom: 1px;
  background: #fff;
}
h2 {
  margin: 0;
  padding: 11px 12px 9px;
  font-size: 16px;
  font-weight: 400;
}
h3 {
  margin: 0;
  padding: 4px 12px 7px;
  font-size: 14px;
  font-weight: 700;
}
.map {
  position: relative;
  height: 400px;
}
.world {
  display: block;
  width: 100%;
  height: 100%;
}
.world .water {
  fill: #d4d9e0;
}
.world .land {
  fill: #f5f5f5;
}
.world .border {
  fill: none;
  stroke: #d6d6d6;
  stroke-width: 3;
  stroke-linejoin: round;
}
.world .isle {
  fill: none;
  stroke: #f0f1f2;
  stroke-width: 4;
  stroke-dasharray: 9 5 5 7;
}
.world .low {
  fill: #fff;
  fill-opacity: 0.8;
  stroke: #e8e8e8;
  stroke-width: 2;
}
.world .high {
  fill: #e3823f;
}
.map-tools {
  position: absolute;
  top: 10px;
  left: 10px;
  display: grid;
  gap: 10px;
}
.tool-box {
  display: grid;
  gap: 5px;
  padding: 5px;
  border-radius: 6px;
  background: rgba(0, 0, 0, 0.25);
}
.tool-box button {
  display: grid;
  place-items: center;
  width: 19px;
  height: 19px;
  padding: 0;
  border: 0;
  border-radius: 4px;
  background: rgba(255, 255, 255, 0.75);
}
.legend {
  position: absolute;
  right: 10px;
  bottom: 14px;
  margin: 0;
  padding: 8px 13px 4px 11px;
  background: rgba(255, 255, 255, 0.75);
  line-height: 16px;
  list-style: none;
}
.legend li {
  display: flex;
  align-items: center;
  gap: 6px;
}
.legend i {
  width: 17px;
  height: 13px;
}
.s1 {
  border: 1px solid #ccc;
  background: #fff;
}
.s2 {
  background: #f6d3bd;
}
.s3 {
  background: #edaa7d;
}
.s4 {
  background: #e3823f;
}
.s5 {
  background: #d95800;
}

/* alerts table */
.alerts {
  margin: 0;
  padding: 0;
}
.alerts h3 {
  padding: 8px 12px 19px;
}
table {
  width: 100%;
  border-spacing: 0;
  table-layout: fixed;
}
.c-time {
  width: 291px;
}
.c-type {
  width: 145px;
}
.c-src {
  width: 169px;
}
.c-sport {
  width: 122px;
}
.c-proto {
  width: 95px;
}
.c-dest {
  width: 170px;
}
.c-dport {
  width: 138px;
}
th {
  height: 26px;
  padding: 1px 8px 0;
  border: solid #bfbfbf;
  border-width: 1px 1px 1px 0;
  background: linear-gradient(#f8f8f8, #ededed);
  font-weight: 400;
  text-align: left;
}
th svg {
  width: 6px;
  height: 10px;
  margin-left: 2px;
  color: #bbb;
  vertical-align: -1px;
}
th:first-child, td:first-child {
  padding-left: 12px;
}
th:last-child {
  padding-right: 12px;
  border-right: 0;
}
.num {
  text-align: right;
}
td {
  height: 25px;
  padding: 2px 8px 0;
  border-bottom: 1px solid #d2d2d2;
}
tbody tr:nth-child(even) {
  background: #f5f5f5;
}
.mask {
  position: relative;
}
.mask::after {
  content: "";
  position: absolute;
  top: 0;
  bottom: -1px;
  background: #fff;
}
.ip::after {
  left: 3px;
  width: 98px;
}
.sport::after {
  right: 4px;
  width: 43px;
}
.dport::after {
  right: 0;
  width: 60px;
}
.spot {
  position: absolute;
  right: 79px;
  bottom: 1px;
  width: 6px;
  height: 6px;
  background: #fff;
}
```
